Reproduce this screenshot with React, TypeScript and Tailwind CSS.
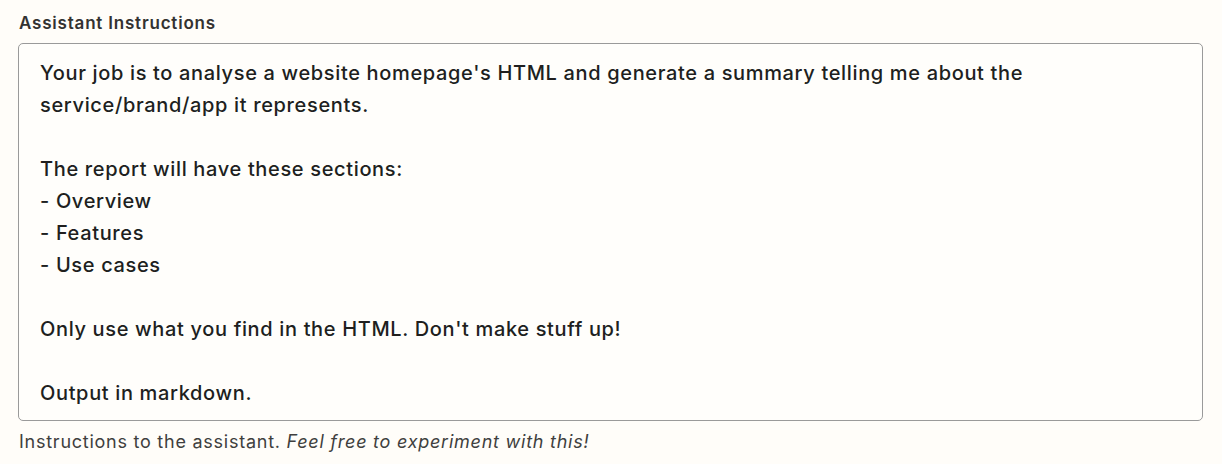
export default function App() {
  const text = `Your job is to analyse a website homepage's HTML and generate a summary telling me about the
service/brand/app it represents.

The report will have these sections:
- Overview
- Features
- Use cases

Only use what you find in the HTML. Don't make stuff up!

Output in markdown.`;
  return (
    <div className="min-h-screen bg-[#fffdf9] font-['Inter',sans-serif] text-[#2d2e2e]">
      <div className="pl-[18px] pr-[19px] pt-[12px]">
        <div className="pl-[1px] text-[17px] font-semibold leading-[22px] tracking-[0.8px] text-[#333231]">
          Assistant Instructions
        </div>
        <div className="mt-[9px] rounded-[5px] border border-[#9a9a9a] bg-[#fffefb] px-[21px] pt-[13px] pb-[11px]">
          <div className="whitespace-pre-wrap text-[20px] font-medium leading-[32px] tracking-[0.65px] text-[#201f1e]">
            {text}
          </div>
        </div>
        <div className="mt-[10px] pl-[1px] text-[18px] leading-[22px] tracking-[0.75px] text-[#403f3e]">
          Instructions to the assistant. <em>Feel free to experiment with this!</em>
        </div>
      </div>
    </div>
  );
}
